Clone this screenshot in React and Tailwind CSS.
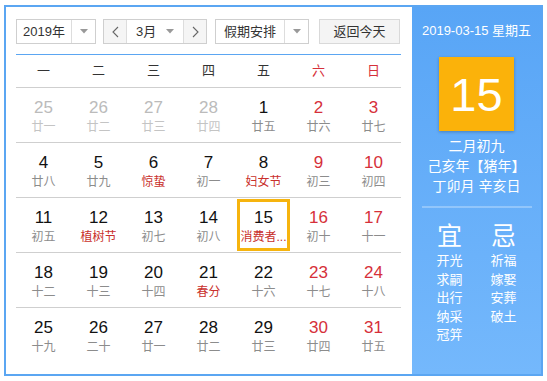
import React from 'react';

const weekNames = ['一', '二', '三', '四', '五', '六', '日'];

// [day, lunar, kind] kind: o = other month, f = festival (red lunar)
const rows = [
  [['25', '廿一', 'o'], ['26', '廿二', 'o'], ['27', '廿三', 'o'], ['28', '廿四', 'o'], ['1', '廿五'], ['2', '廿六'], ['3', '廿七']],
  [['4', '廿八'], ['5', '廿九'], ['6', '惊蛰', 'f'], ['7', '初一'], ['8', '妇女节', 'f'], ['9', '初三'], ['10', '初四']],
  [['11', '初五'], ['12', '植树节', 'f'], ['13', '初七'], ['14', '初八'], ['15', '消费者...', 'f'], ['16', '初十'], ['17', '十一']],
  [['18', '十二'], ['19', '十三'], ['20', '十四'], ['21', '春分', 'f'], ['22', '十六'], ['23', '十七'], ['24', '十八']],
  [['25', '十九'], ['26', '二十'], ['27', '廿一'], ['28', '廿二'], ['29', '廿三'], ['30', '廿四'], ['31', '廿五']],
];

const Caret = () => (
  <svg width="8" height="5" viewBox="0 0 8 5" className="block">
    <path d="M0 0 L8 0 L4 4.5 Z" fill="#999" />
  </svg>
);

const Chevron = ({ dir }) => (
  <svg width="7" height="12" viewBox="0 0 7 12" className="block">
    <path d={dir === 'l' ? 'M6 1 L1 6 L6 11' : 'M1 1 L6 6 L1 11'} fill="none" stroke="#666" strokeWidth="1.1" />
  </svg>
);

const DayCell = ({ cell, col }) => {
  const [day, lunar, kind] = cell;
  const weekend = col >= 5;
  const other = kind === 'o';
  const today = day === '15' && !other;
  let numColor = 'text-[#111]';
  if (other) numColor = 'text-[#bbb]';
  else if (weekend) numColor = 'text-[#d6303a]';
  let lunarColor = 'text-[#8c8c8c]';
  if (other) lunarColor = 'text-[#c4c4c4]';
  else if (kind === 'f') lunarColor = 'text-[#c9302c]';
  return (
    <div className="h-[55px] border-b border-[#cfcfcf] p-[1px]">
      <div className={`flex h-[52px] flex-col items-center ${today ? 'border-[3px] border-[#f6b40e]' : 'border-[3px] border-transparent'}`}>
        <div className={`mt-[6px] text-[17px] leading-[20px] ${numColor}`}>{day}</div>
        <div className={`whitespace-nowrap text-center text-[12px] leading-[18px] ${lunarColor}`}>{lunar}</div>
      </div>
    </div>
  );
};

const App = () => {
  return (
    <div className="pl-[4px] pt-[5px]" style={{ fontFamily: '"Liberation Sans", "Noto Sans CJK SC", sans-serif' }}>
      <div className="flex h-[371px] w-[539px] border-2 border-[#5ba6f2] bg-white">
        <div className="w-[406px] pl-[10px] pt-[12px]">
          <div className="flex h-[25px] text-[13px] text-[#333]">
            <div className="flex w-[80px] border border-[#cfcfcf]">
              <div className="flex flex-1 items-center justify-center">2019年</div>
              <div className="flex w-[24px] items-center justify-center border-l border-[#ddd]"><Caret /></div>
            </div>
            <div className="ml-[7px] flex w-[104px] border border-[#cfcfcf]">
              <div className="flex w-[22px] items-center justify-center bg-[#f5f5f5]"><Chevron dir="l" /></div>
              <div className="flex flex-1 items-center border-x border-[#ddd] pl-[9px]">
                <span className="flex-1">3月</span>
                <span className="mr-[9px]"><Caret /></span>
              </div>
              <div className="flex w-[22px] items-center justify-center bg-[#f5f5f5]"><Chevron dir="r" /></div>
            </div>
            <div className="ml-[8px] flex w-[94px] border border-[#cfcfcf]">
              <div className="flex flex-1 items-center justify-center">假期安排</div>
              <div className="flex w-[24px] items-center justify-center border-l border-[#ddd]"><Caret /></div>
            </div>
            <div className="ml-[10px] flex w-[81px] items-center justify-center border border-[#d9d9d9] bg-[#f4f4f4]">返回今天</div>
          </div>
          <div className="mt-[10px] w-[385px] border-t border-[#5ba6f2]">
            <div className="grid h-[33px] grid-cols-7 border-b border-[#cfcfcf] text-[13px]">
              {weekNames.map((w, i) => (
                <div key={w} className={`flex items-center justify-center ${i >= 5 ? 'text-[#d6303a]' : 'text-[#333]'}`}>{w}</div>
              ))}
            </div>
            {rows.map((r, ri) => (
              <div key={ri} className={`grid grid-cols-7 ${ri === rows.length - 1 ? '[&>div]:border-b-0' : ''}`}>
                {r.map((c, ci) => <DayCell key={ci} cell={c} col={ci} />)}
              </div>
            ))}
          </div>
        </div>
        <div className="flex w-[129px] flex-col items-center bg-gradient-to-b from-[#58a5f6] to-[#74b8fc] text-white">
          <div className="mt-[16px] text-[13px] leading-[16px]">2019-03-15 星期五</div>
          <div className="mt-[18px] flex h-[74px] w-[75px] items-center justify-center bg-[#fbb20a] text-[47px] leading-none shadow-[0_1px_3px_rgba(0,0,0,0.25)]">15</div>
          <div className="mt-[5px] text-[14px] leading-[20px]">二月初九</div>
          <div className="text-[14px] leading-[20px]">己亥年【猪年】</div>
          <div className="text-[14px] leading-[20px]">丁卯月 辛亥日</div>
          <div className="mt-[10px] h-[2px] w-[110px] bg-[#92c6fb]" />
          <div className="mt-[13px] flex w-[110px] justify-between px-[10px]">
            <div className="flex w-[36px] flex-col items-center">
              <div className="text-[25px] leading-[30px]">宜</div>
              <div className="mt-[1px] text-[13px] leading-[18.5px] text-center">
                <div>开光</div><div>求嗣</div><div>出行</div><div>纳采</div><div>冠笄</div>
              </div>
            </div>
            <div className="flex w-[36px] flex-col items-center">
              <div className="text-[25px] leading-[30px]">忌</div>
              <div className="mt-[1px] text-[13px] leading-[18.5px] text-center">
                <div>祈福</div><div>嫁娶</div><div>安葬</div><div>破土</div>
              </div>
            </div>
          </div>
        </div>
      </div>
    </div>
  );
};

export default App;
